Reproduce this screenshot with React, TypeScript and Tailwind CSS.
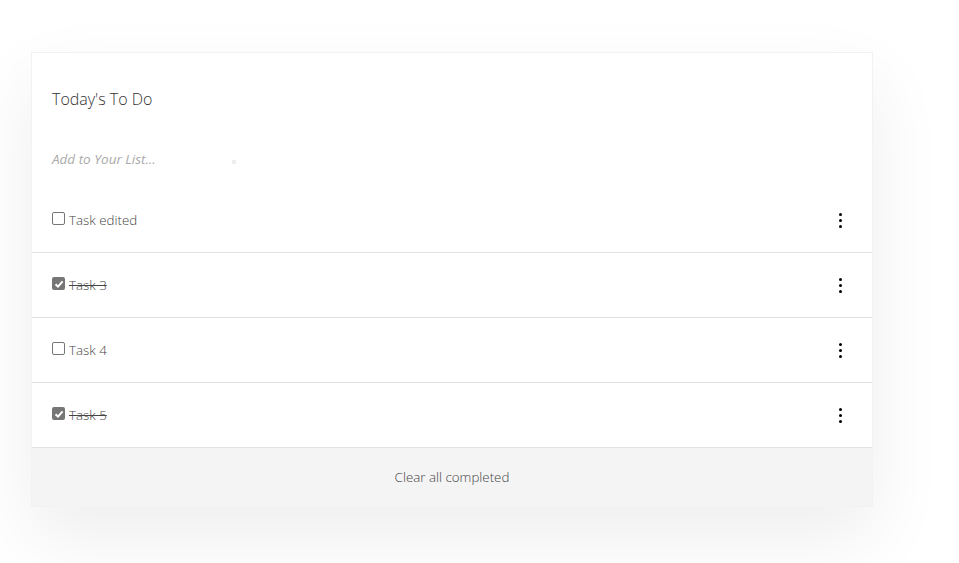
import React from "react";

const tasks = [
  { label: "Task edited", done: false },
  { label: "Task 3", done: true },
  { label: "Task 4", done: false },
  { label: "Task 5", done: true },
];

function Box({ done }: { done: boolean }) {
  if (done) {
    return (
      <span className="-mt-[3px] flex h-[13px] w-[13px] items-center justify-center rounded-[2px] bg-[#767676]">
        <svg width="10" height="10" viewBox="0 0 10 10">
          <path d="M1.5 5.2 L4 7.6 L8.6 2.4" fill="none" stroke="#fff" strokeWidth="2" />
        </svg>
      </span>
    );
  }
  return <span className="-mt-[3px] block h-[13px] w-[13px] rounded-[2px] border border-[#767676] bg-white" />;
}

function Dots() {
  return (
    <div className="flex flex-col items-center gap-[3px]">
      <span className="block h-[3px] w-[3px] rounded-full bg-black" />
      <span className="block h-[3px] w-[3px] rounded-full bg-black" />
      <span className="block h-[3px] w-[3px] rounded-full bg-black" />
    </div>
  );
}

export default function App() {
  return (
    <div className="min-h-[563px] bg-white pt-[52px] pl-[31px]" style={{ fontFamily: '"Open Sans", sans-serif' }}>
      <div className="w-[842px] border border-[#f2f2f2] bg-white shadow-[0_30px_70px_rgba(0,0,0,0.07)]">
        <div className="px-[20px] pt-[34px]">
          <h1 className="text-[16px] font-light leading-[24px] text-[#333]">Today's To Do</h1>
          <div className="mt-[38px] flex items-center">
            <span className="w-[180px] text-[13.5px] font-normal italic leading-[20px] text-[#aaa]">Add to Your List...</span>
            <span className="mt-[6px] block h-[4px] w-[4px] bg-[#eee]" />
          </div>
        </div>
        <div className="mt-[19px]">
          {tasks.map((t, i) => (
            <div key={i} className="flex h-[65px] items-center justify-between border-b border-[#e2e2e2] pl-[20px] pr-[30px]">
              <div className="flex items-center gap-[4px]">
                <Box done={t.done} />
                <span className={`text-[13.33px] font-light leading-[18px] text-[#444] ${t.done ? "line-through" : ""}`}>{t.label}</span>
              </div>
              <Dots />
            </div>
          ))}
        </div>
        <div className="flex h-[58px] items-center justify-center bg-[#f4f4f4] pt-[2px]">
          <span className="text-[13.33px] font-light text-[#444]">Clear all completed</span>
        </div>
      </div>
    </div>
  );
}
